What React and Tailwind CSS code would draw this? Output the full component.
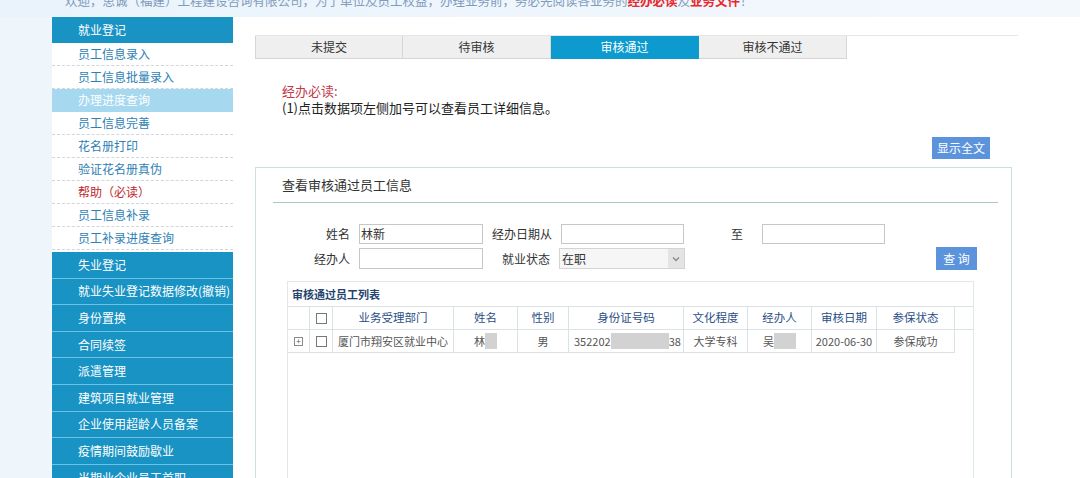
const subItems = [
  { label: "员工信息录入" },
  { label: "员工信息批量录入" },
  { label: "办理进度查询", active: true },
  { label: "员工信息完善" },
  { label: "花名册打印" },
  { label: "验证花名册真伪" },
  { label: "帮助（必读）", red: true },
  { label: "员工信息补录" },
  { label: "员工补录进度查询" },
];

const mainItems = [
  "失业登记",
  "就业失业登记数据修改(撤销)",
  "身份置换",
  "合同续签",
  "派遣管理",
  "建筑项目就业管理",
  "企业使用超龄人员备案",
  "疫情期间鼓励歇业",
  "当期业企业员工首职",
];

const tabs = ["未提交", "待审核", "审核通过", "审核不通过"];

const cols = [
  { w: "w-[22px]", h: "" },
  { w: "w-[23px]", h: "check" },
  { w: "w-[121px]", h: "业务受理部门" },
  { w: "w-[64px]", h: "姓名" },
  { w: "w-[51px]", h: "性别" },
  { w: "w-[115px]", h: "身份证号码" },
  { w: "w-[64px]", h: "文化程度" },
  { w: "w-[64px]", h: "经办人" },
  { w: "w-[65px]", h: "审核日期" },
  { w: "w-[78px]", h: "参保状态" },
];

const Check = () => (
  <span className="inline-block w-[11px] h-[11px] border border-[#777] bg-white" />
);

const Mask = ({ w }) => (
  <span className={`inline-block h-[16px] bg-[#d2d2d2] align-middle ${w}`} />
);

const App = () => {
  return (
    <div
      className="w-[1080px] h-[478px] overflow-hidden bg-white flex flex-col"
      style={{ fontFamily: '"Noto Sans CJK SC", "Liberation Sans", sans-serif' }}
    >
      {/* top banner, text cut at top edge */}
      <div className="h-[17px] shrink-0 bg-gradient-to-r from-[#eaf3fb] to-[#f3f8fd] overflow-hidden">
        <div className="pl-[65px] -mt-[8px] text-[12.5px] leading-[18px] text-[#7f9bbd] whitespace-nowrap">
          欢迎，思诚（福建）工程建设咨询有限公司，为了单位及员工权益，办理业务前，务必先阅读各业务的
          <span className="text-[#e8262b] font-bold">经办必读</span>及
          <span className="text-[#e8262b] font-bold">业务文件</span>！
        </div>
      </div>

      <div className="flex flex-1 min-h-0">
        <div className="w-[52px] shrink-0 bg-[#eef5fb]" />

        {/* sidebar */}
        <div className="w-[181px] shrink-0 flex flex-col text-[12px] overflow-hidden">
          <div className="h-[26px] shrink-0 bg-[#1993c4] text-white flex items-center pl-[26px]">
            就业登记
          </div>
          {subItems.map((it, i) => (
            <div
              key={i}
              className={`h-[23px] shrink-0 flex items-center pl-[26px] border-b border-dashed ${
                it.active
                  ? "bg-[#a6d8f0] text-white border-[#a6d8f0]"
                  : "bg-white border-[#cfd6dc] " +
                    (it.red ? "text-[#c0282d]" : "text-[#2e7fb3]")
              }`}
            >
              {it.label}
            </div>
          ))}
          <div className="h-[2px] shrink-0 bg-white" />
          {mainItems.map((t, i) => (
            <div
              key={i}
              className="h-[26.6px] shrink-0 bg-[#1993c4] text-white flex items-center pl-[26px] border-b border-[#6cc3e6]"
            >
              {t}
            </div>
          ))}
        </div>

        {/* main */}
        <div className="flex-1 bg-white pl-[22px] pt-[18px]">
          <div className="w-[763px] border-t border-[#e6e6e6] flex">
            {tabs.map((t, i) => (
              <div
                key={t}
                className={`w-[148px] h-[23px] flex items-center justify-center text-[12px] border-r border-b ${
                  i === 2
                    ? "bg-[#0d9ace] text-white border-[#0d9ace]"
                    : "bg-[#efefef] text-[#333] border-[#d6d6d6]"
                } ${i === 0 ? "border-l" : ""}`}
              >
                {t}
              </div>
            ))}
          </div>

          <div className="pl-[27px] pt-[23px] text-[13px] leading-[17px]">
            <div className="text-[#c23a4c]">经办必读:</div>
            <div className="text-[#222]">(1)点击数据项左侧加号可以查看员工详细信息。</div>
          </div>

          <div className="w-[757px] flex justify-end pt-[21px] pr-[22px]">
            <button className="w-[58px] h-[22px] bg-[#5b93dd] text-white text-[12px]">
              显示全文
            </button>
          </div>

          {/* panel */}
          <div className="mt-[8px] w-[757px] h-[320px] border border-[#c9e0e0] pl-[17px] pr-[13px]">
            <div className="h-[35px] border-b border-[#a9c9c9] flex items-center pl-[9px] text-[13px] text-[#333]">
              查看审核通过员工信息
            </div>

            <div className="pt-[21px] text-[12px] text-[#333]">
              <div className="flex items-center h-[20px]">
                <span className="w-[80px] text-right pr-[3px]">姓名</span>
                <span className="ml-[6px] w-[124px] h-[20px] border border-[#c7c7c7] flex items-center pl-[1px]">
                  林新
                </span>
                <span className="w-[69px] text-right">经办日期从</span>
                <span className="ml-[9px] w-[123px] h-[20px] border border-[#c7c7c7]" />
                <span className="w-[59px] text-right">至</span>
                <span className="ml-[19px] w-[123px] h-[20px] border border-[#c7c7c7]" />
              </div>
              <div className="flex items-center h-[23px] mt-[3px]">
                <span className="w-[80px] text-right pr-[3px]">经办人</span>
                <span className="ml-[6px] w-[124px] h-[21px] border border-[#c7c7c7]" />
                <span className="w-[67px] text-right">就业状态</span>
                <span className="ml-[9px] w-[126px] h-[21px] border border-[#d4d4d4] bg-[#f6f6f6] flex items-center justify-between">
                  <span className="pl-[2px]">在职</span>
                  <span className="w-[16px] h-full bg-[#e4e4e4] flex items-center justify-center">
                    <svg width="8" height="6" viewBox="0 0 8 6">
                      <path d="M1 1.5 L4 4.5 L7 1.5" fill="none" stroke="#888" strokeWidth="1.3" />
                    </svg>
                  </span>
                </span>
                <span className="flex-1" />
                <button className="mr-[21px] w-[41px] h-[23px] bg-[#5b93dd] text-white text-[12px]">
                  查 询
                </button>
              </div>
            </div>

            {/* list */}
            <div className="mt-[11px] ml-[14px] w-[687px] h-[200px] border border-[#dfe9ec]">
              <div className="h-[24px] flex items-center pl-[4px] text-[11px] font-bold text-[#24446e]">
                审核通过员工列表
              </div>
              <div className="flex h-[24px] border-y border-[#dbe2e6] text-[11.5px] text-[#2a4f86]">
                {cols.map((c, i) => (
                  <div
                    key={i}
                    className={`${c.w} shrink-0 border-r border-[#dbe2e6] flex items-center justify-center`}
                  >
                    {c.h === "check" ? <Check /> : c.h}
                  </div>
                ))}
              </div>
              <div className="flex h-[23px] w-[667px] border-b border-[#dbe2e6] text-[11px] text-[#555] whitespace-nowrap">
                <div className="w-[22px] shrink-0 border-r border-[#dbe2e6] flex items-center justify-center">
                  <span className="w-[9px] h-[9px] border border-[#8a8a8a] flex items-center justify-center text-[8px] leading-none text-[#555]">
                    +
                  </span>
                </div>
                <div className="w-[23px] shrink-0 border-r border-[#dbe2e6] flex items-center justify-center">
                  <Check />
                </div>
                <div className="w-[121px] shrink-0 border-r border-[#dbe2e6] flex items-center justify-center">
                  厦门市翔安区就业中心
                </div>
                <div className="w-[64px] shrink-0 border-r border-[#dbe2e6] flex items-center justify-center">
                  <span>林</span>
                  <Mask w="w-[12px]" />
                </div>
                <div className="w-[51px] shrink-0 border-r border-[#dbe2e6] flex items-center justify-center">
                  男
                </div>
                <div className="w-[115px] shrink-0 border-r border-[#dbe2e6] flex items-center pl-[5px]">
                  <span>352202</span>
                  <Mask w="w-[58px]" />
                  <span>38</span>
                </div>
                <div className="w-[64px] shrink-0 border-r border-[#dbe2e6] flex items-center justify-center">
                  大学专科
                </div>
                <div className="w-[64px] shrink-0 border-r border-[#dbe2e6] flex items-center justify-center">
                  <span>吴</span>
                  <Mask w="w-[22px]" />
                </div>
                <div className="w-[65px] shrink-0 border-r border-[#dbe2e6] flex items-center justify-center">
                  2020-06-30
                </div>
                <div className="w-[78px] shrink-0 border-r border-[#dbe2e6] flex items-center justify-center">
                  参保成功
                </div>
              </div>
            </div>
          </div>
        </div>
      </div>
    </div>
  );
};

export default App;
